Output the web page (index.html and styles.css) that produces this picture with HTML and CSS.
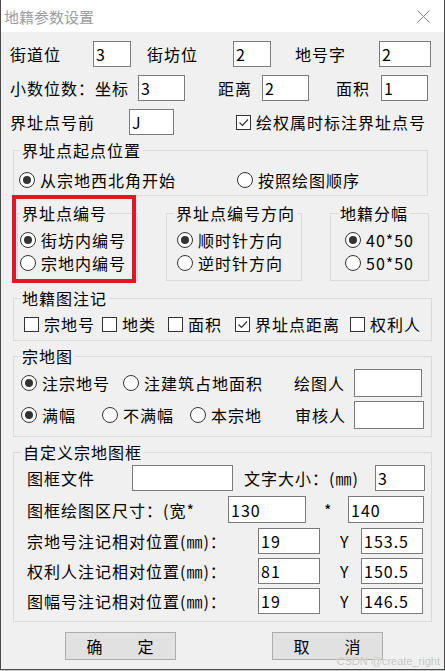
FILE: index.html
```html
<!DOCTYPE html>
<html lang="zh-CN">
<head>
    <meta charset="UTF-8">
    <meta name="viewport" content="width=device-width, initial-scale=1.0">
    <title>地籍参数设置</title>
    <link rel="stylesheet" href="styles.css">
</head>
<body>

<div class="dialog">
    <div class="titlebar">
        <span class="title">地籍参数设置</span>
        <svg class="close" width="13" height="13" viewBox="0 0 13 13">
            <path d="M0.5 0.5 L12.5 12.5 M12.5 0.5 L0.5 12.5" stroke="#7a7a7a" stroke-width="1" fill="none"/>
        </svg>
    </div>

    <div class="body">
        <!-- top fields -->
        <div class="row row-code">
            <span class="cap cap-street">街道位</span><input class="box box-s" value="3">
            <span class="cap cap-block">街坊位</span><input class="box box-s" value="2">
            <span class="cap cap-lot">地号字</span><input class="box box-w" value="2">
        </div>
        <div class="row row-digits">
            <span class="cap cap-coord">小数位数：坐标</span><input class="box box-m" value="3">
            <span class="cap cap-dist">距离</span><input class="box box-m" value="2">
            <span class="cap cap-area">面积</span><input class="box box-m" value="1">
        </div>
        <div class="row row-prefix">
            <span class="cap cap-prefix">界址点号前</span><input class="box box-p" value="J">
            <span class="opt opt-mark"><span class="check on"><svg width="13" height="13" viewBox="0 0 13 13"><path d="M2.5 6.5 L5.5 9.5 L11 3.5" stroke="#333" stroke-width="1.2" fill="none"/></svg></span>绘权属时标注界址点号</span>
        </div>

        <!-- start point -->
        <div class="group group-start">
            <div class="group-title">界址点起点位置</div>
            <div class="line line-start">
                <span class="opt opt-nw"><span class="radio on"></span>从宗地西北角开始</span>
                <span class="opt"><span class="radio"></span>按照绘图顺序</span>
            </div>
        </div>

        <div class="groups">
            <div class="group group-num">
                <div class="group-title">界址点编号</div>
                <div class="stack">
                    <span class="opt"><span class="radio on"></span>街坊内编号</span>
                    <span class="opt"><span class="radio"></span>宗地内编号</span>
                </div>
                <div class="highlight"></div>
            </div>
            <div class="group group-dir">
                <div class="group-title">界址点编号方向</div>
                <div class="stack">
                    <span class="opt"><span class="radio on"></span>顺时针方向</span>
                    <span class="opt"><span class="radio"></span>逆时针方向</span>
                </div>
            </div>
            <div class="group group-sheet">
                <div class="group-title">地籍分幅</div>
                <div class="stack">
                    <span class="opt"><span class="radio on"></span>40*50</span>
                    <span class="opt"><span class="radio"></span>50*50</span>
                </div>
            </div>
        </div>

        <!-- map notes -->
        <div class="group group-wide group-notes">
            <div class="group-title">地籍图注记</div>
            <div class="line line-notes">
                <span class="opt n1"><span class="check"></span>宗地号</span>
                <span class="opt n2"><span class="check"></span>地类</span>
                <span class="opt n3"><span class="check"></span>面积</span>
                <span class="opt n4"><span class="check on"><svg width="13" height="13" viewBox="0 0 13 13"><path d="M2.5 6.5 L5.5 9.5 L11 3.5" stroke="#333" stroke-width="1.2" fill="none"/></svg></span>界址点距离</span>
                <span class="opt"><span class="check"></span>权利人</span>
            </div>
        </div>

        <!-- parcel map -->
        <div class="group group-wide group-parcel">
            <div class="group-title">宗地图</div>
            <div class="line line-parcel">
                <span class="opt p1"><span class="radio on"></span>注宗地号</span>
                <span class="opt p2"><span class="radio"></span>注建筑占地面积</span>
                <span class="cap cap-drawer">绘图人</span><input class="box box-name" value="">
            </div>
            <div class="line line-parcel">
                <span class="opt p3"><span class="radio on"></span>满幅</span>
                <span class="opt p4"><span class="radio"></span>不满幅</span>
                <span class="opt p5"><span class="radio"></span>本宗地</span>
                <span class="cap cap-check">审核人</span><input class="box box-name2" value="">
            </div>
        </div>

        <!-- custom frame -->
        <div class="group group-wide group-frame">
            <div class="group-title">自定义宗地图框</div>
            <div class="line line-frame line-file">
                <span class="cap cap-file">图框文件</span><input class="box box-file" value="">
                <span class="cap cap-size">文字大小：(㎜)</span><input class="box box-font" value="3">
            </div>
            <div class="line line-frame line-area">
                <span class="cap cap-area2">图框绘图区尺寸：(宽*</span><input class="box box-wd" value="130">
                <span class="cap cap-star">*</span><input class="box box-ht" value="140">
            </div>
            <div class="line line-frame line-pos">
                <span class="cap cap-pos">宗地号注记相对位置(㎜)：</span><input class="box box-x" value="19">
                <span class="cap cap-y">Y</span><input class="box box-y" value="153.5">
            </div>
            <div class="line line-frame line-pos">
                <span class="cap cap-pos">权利人注记相对位置(㎜)：</span><input class="box box-x" value="81">
                <span class="cap cap-y">Y</span><input class="box box-y" value="150.5">
            </div>
            <div class="line line-frame line-pos">
                <span class="cap cap-pos">图幅号注记相对位置(㎜)：</span><input class="box box-x" value="19">
                <span class="cap cap-y">Y</span><input class="box box-y" value="146.5">
            </div>
        </div>

        <div class="buttons">
            <button class="btn">确　　定</button>
            <button class="btn btn-cancel">取　　消</button>
        </div>
    </div>

    <div class="watermark">CSDN @create_right</div>
</div>

</body>
</html>
```

FILE: styles.css
```css
body {
    margin: 0;
    background: #c9c9c9;
    font-family: "Noto Sans CJK SC", sans-serif;
    font-size: 16px;
    letter-spacing: 1px;
    color: #000;
}
.dialog {
    position: relative;
    width: 445px;
    height: 670px;
    box-sizing: border-box;
    background: #f0f0f0;
    border: 1px solid #4a4a4a;
    border-top: none;
}
.titlebar {
    height: 32px;
    background: #fff;
    display: flex;
    align-items: center;
    justify-content: space-between;
    padding: 0 14px 0 3px;
}
.title {
    font-size: 15px;
    letter-spacing: 0;
    color: #9c9c9c;
}
.close {
    margin-top: 1px;
}
.body {
    padding: 9px 0 0 9px;
}

/* rows of fields */
.row, .line {
    display: flex;
    align-items: center;
    height: 26px;
}
.row + .row {
    margin-top: 8px;
}
.cap {
    flex: none;
    line-height: 20px;
    white-space: nowrap;
}
.box {
    flex: none;
    box-sizing: border-box;
    height: 26px;
    margin: 0;
    padding: 0 2px;
    border: 1px solid #7a7a7a;
    background: #fff;
    font-family: "Noto Sans CJK SC", sans-serif;
    font-size: 16px;
    letter-spacing: 1px;
    color: #000;
    outline: none;
}
.cap-street { width: 83px; }
.cap-block { width: 86px; margin-left: 16px; }
.cap-lot { width: 84px; margin-left: 24px; }
.box-s { width: 38px; }
.box-w { width: 52px; }

.cap-coord { width: 128px; }
.cap-dist { width: 44px; margin-left: 33px; }
.cap-area { width: 45px; margin-left: 27px; }
.box-m { width: 47px; }

.cap-prefix { width: 119px; }
.box-p { width: 45px; }
.opt-mark { margin-left: 62px; }

/* radio & check */
.opt {
    display: flex;
    align-items: center;
    flex: none;
    white-space: nowrap;
    line-height: 20px;
}
.radio {
    flex: none;
    width: 16px;
    height: 16px;
    box-sizing: border-box;
    border: 1px solid #333;
    border-radius: 50%;
    background: #fff;
    margin-right: 5px;
    display: flex;
    align-items: center;
    justify-content: center;
}
.radio.on::after {
    content: "";
    width: 8px;
    height: 8px;
    border-radius: 50%;
    background: #333;
}
.check {
    flex: none;
    width: 15px;
    height: 15px;
    box-sizing: border-box;
    border: 1px solid #333;
    background: #fff;
    margin-right: 5px;
    display: flex;
    align-items: center;
    justify-content: center;
}

/* group boxes */
.group {
    position: relative;
    flex: none;
    box-sizing: border-box;
    border: 1px solid #dadada;
}
.group-title {
    width: max-content;
    margin-top: -11px;
    padding: 0 2px;
    line-height: 20px;
    background: #f0f0f0;
}
.group-start {
    width: 415px;
    margin: 15px 0 0 3px;
    padding: 0 0 2px 5px;
}
.group-start .group-title { margin-left: 1px; }
.line-start {
    margin-top: 7px;
}
.opt-nw { width: 218px; }

.groups {
    display: flex;
    margin-top: 17px;
}
.group-num {
    width: 121px;
    height: 68px;
    margin-left: 7px;
    padding-left: 2px;
}
.group-num .group-title { margin-left: 0; }
.group-dir {
    width: 136px;
    height: 68px;
    margin-left: 28px;
    padding-left: 10px;
}
.group-dir .group-title { margin-left: -3px; }
.group-sheet {
    width: 99px;
    height: 68px;
    margin-left: 28px;
    padding-left: 14px;
}
.group-sheet .group-title { margin-left: -7px; }
.stack {
    display: flex;
    flex-direction: column;
    gap: 3px;
    margin-top: 7px;
}
.highlight {
    position: absolute;
    left: -6px;
    top: -19px;
    width: 124px;
    height: 88px;
    box-sizing: border-box;
    border: 4px solid #e5161f;
}

.group-wide {
    width: 419px;
    margin-left: 3px;
}
.group-notes {
    margin-top: 17px;
    padding: 0 0 6px 10px;
}
.group-notes .group-title { margin-left: -4px; }
.line-notes {
    height: 20px;
    margin-top: 6px;
}
.n1 { width: 78px; }
.n2 { width: 66px; }
.n3 { width: 67px; }
.n4 { width: 115px; }

.group-parcel {
    margin-top: 15px;
    padding: 0 0 7px 7px;
}
.group-parcel .group-title { margin-left: -1px; }
.line-parcel {
    height: 28px;
    margin-top: 3px;
}
.line-parcel + .line-parcel {
    margin-top: 4px;
}
.p1 { width: 102px; }
.p2 { width: 171px; }
.p3 { width: 81px; }
.p4 { width: 88px; }
.p5 { width: 105px; }
.cap-drawer { width: 60px; }
.cap-check { width: 59px; }
.box-name { width: 68px; height: 28px; }
.box-name2 { width: 70px; height: 28px; }

.group-frame {
    margin-top: 15px;
    padding: 0 0 7px 13px;
}
.group-frame .group-title { margin-left: -6px; }
.line-file {
    margin-top: 3px;
}
.line-area {
    height: 27px;
    margin-top: 5px;
}
.line-area .box {
    height: 27px;
}
.line-pos {
    margin-top: 4px;
}
.line-area + .line-pos {
    margin-top: 5px;
}
.cap-file { width: 105px; }
.box-file { width: 101px; }
.cap-size { width: 131px; margin-left: 11px; }
.box-font { width: 50px; }
.cap-area2 { width: 201px; }
.box-wd { width: 78px; }
.cap-star { width: 24px; padding-left: 18px; }
.box-ht { width: 76px; }
.cap-pos { width: 231px; }
.box-x { width: 62px; }
.cap-y { width: 21px; padding-left: 20px; }
.box-y { width: 62px; }

/* buttons */
.buttons {
    display: flex;
    margin: 10px 0 0 55px;
}
.btn {
    width: 111px;
    height: 28px;
    padding: 0;
    background: #e1e1e1;
    border: 1px solid #adadad;
    font-family: "Noto Sans CJK SC", sans-serif;
    font-size: 16px;
    letter-spacing: 1px;
    color: #000;
}
.btn-cancel {
    margin-left: 96px;
}

.watermark {
    position: absolute;
    right: 4px;
    bottom: 2px;
    font-family: "Liberation Sans", sans-serif;
    font-size: 11px;
    letter-spacing: 0;
    color: #c4c4c4;
    text-shadow: 0 0 1px #fff;
}
```
